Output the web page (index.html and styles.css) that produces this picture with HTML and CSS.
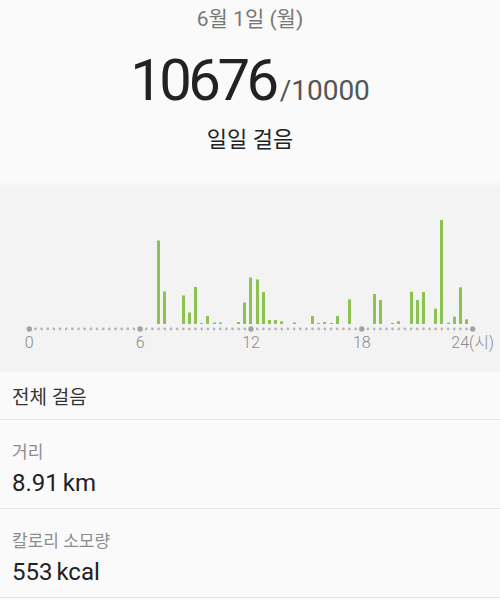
FILE: index.html
```html
<!DOCTYPE html>
<html lang="ko">
<head>
<meta charset="utf-8">
<link rel="stylesheet" href="styles.css">
</head>
<body>
<header class="summary">
  <div class="date">6월 1일 (월)</div>
  <div class="total"><span class="steps">10676</span><span class="goal">/10000</span></div>
  <div class="caption">일일 걸음</div>
</header>
<section class="chart">
  <svg class="chart-svg" width="500" height="189" viewBox="0 0 500 189">
    <g class="bars">
      <rect x="157" y="57.5" width="3" height="83.5"/>
      <rect x="163" y="108.5" width="3" height="32.5"/>
      <rect x="182" y="112.5" width="3" height="28.5"/>
      <rect x="188" y="129.5" width="3" height="11.5"/>
      <rect x="194" y="104" width="3" height="37"/>
      <rect x="200" y="140" width="3" height="1"/>
      <rect x="206" y="133" width="3" height="8"/>
      <rect x="213" y="139.5" width="3" height="1.5"/>
      <rect x="219" y="139.5" width="3" height="1.5"/>
      <rect x="237" y="139" width="3" height="2"/>
      <rect x="243" y="119.5" width="3" height="21.5"/>
      <rect x="249" y="94.5" width="3" height="46.5"/>
      <rect x="256" y="96.5" width="3" height="44.5"/>
      <rect x="262" y="109" width="3" height="32"/>
      <rect x="268" y="137" width="3" height="4"/>
      <rect x="274" y="137" width="3" height="4"/>
      <rect x="280" y="138.3" width="3" height="2.7"/>
      <rect x="293" y="139.5" width="3" height="1.5"/>
      <rect x="311" y="133" width="3" height="8"/>
      <rect x="317" y="140" width="3" height="1"/>
      <rect x="323" y="139" width="3" height="2"/>
      <rect x="330" y="140" width="3" height="1"/>
      <rect x="336" y="133" width="3" height="8"/>
      <rect x="348" y="116.3" width="3" height="24.7"/>
      <rect x="373" y="111" width="3" height="30"/>
      <rect x="379" y="117" width="3" height="24"/>
      <rect x="391" y="140" width="3" height="1"/>
      <rect x="397" y="138.3" width="3" height="2.7"/>
      <rect x="410" y="108.7" width="3" height="32.3"/>
      <rect x="416" y="117" width="3" height="24"/>
      <rect x="422" y="109" width="3" height="32"/>
      <rect x="434" y="125.7" width="3" height="15.3"/>
      <rect x="440" y="37" width="3" height="104"/>
      <rect x="447" y="139.7" width="3" height="1.3"/>
      <rect x="453" y="133.7" width="3" height="7.3"/>
      <rect x="459" y="104.3" width="3" height="36.7"/>
      <rect x="465" y="136.3" width="3" height="4.7"/>
    </g>
    <line class="axis-dots" x1="29.3" y1="146" x2="472.7" y2="146"/>
    <g class="axis-major">
      <circle cx="29.3" cy="146" r="2.7"/>
      <circle cx="140.1" cy="146" r="2.7"/>
      <circle cx="251" cy="146" r="2.7"/>
      <circle cx="361.8" cy="146" r="2.7"/>
      <circle cx="472.7" cy="146" r="2.7"/>
    </g>
    <g class="axis-labels">
      <text x="29.3" y="165">0</text>
      <text x="140.1" y="165">6</text>
      <text x="251" y="165">12</text>
      <text x="361.8" y="165">18</text>
      <text x="472.7" y="165">24(시)</text>
    </g>
  </svg>
</section>
<section class="stats">
  <div class="row row-title">전체 걸음</div>
  <div class="row row-stat">
    <div class="stat-label">거리</div>
    <div class="stat-value">8.91 km</div>
  </div>
  <div class="row row-stat">
    <div class="stat-label">칼로리 소모량</div>
    <div class="stat-value">553 kcal</div>
  </div>
</section>
</body>
</html>
```
FILE: styles.css
```css
html, body {
  margin: 0;
  padding: 0;
}
body {
  width: 500px;
  height: 600px;
  overflow: hidden;
  background: #fafafa;
  font-family: Roboto, "Noto Sans CJK KR", sans-serif;
  color: #222;
}
.summary {
  display: flex;
  flex-direction: column;
  align-items: center;
  height: 183px;
  box-sizing: border-box;
  padding-top: 4px;
}
.date {
  font-size: 21px;
  line-height: 30px;
  color: #777;
}
.total {
  margin-top: 16px;
  line-height: 60px;
  display: flex;
  align-items: baseline;
}
.steps {
  font-size: 58px;
  letter-spacing: -3.5px;
  color: #222;
  margin-right: 4px;
}
.goal {
  font-size: 28px;
  color: #555;
}
.caption {
  margin-top: 4px;
  font-size: 22px;
  line-height: 30px;
  color: #222;
}
.chart {
  height: 189px;
  background: linear-gradient(#f6f6f6, #f3f3f3 6px);
}
.chart-svg {
  display: block;
}
.bars rect {
  fill: #8cc350;
}
.axis-dots {
  stroke: #b8b8b8;
  stroke-width: 2.8;
  stroke-linecap: round;
  stroke-dasharray: 0 6.158;
}
.axis-major circle {
  fill: #a3a3a3;
}
.axis-labels text {
  font-family: Roboto, "Noto Sans CJK KR", sans-serif;
  font-size: 16px;
  font-weight: 300;
  fill: #8a8a8a;
  text-anchor: middle;
}
.stats {
  display: flex;
  flex-direction: column;
}
.row {
  padding: 0 12px;
  border-bottom: 1px solid #e5e5e5;
  box-sizing: border-box;
}
.row-title {
  height: 48px;
  display: flex;
  align-items: center;
  font-size: 19px;
  color: #333;
}
.row-stat {
  height: 89px;
  padding-top: 20px;
}
.stat-label {
  font-size: 17px;
  line-height: 24px;
  color: #8c8c8c;
}
.stat-value {
  margin-top: 4px;
  font-size: 24px;
  line-height: 30px;
  color: #222;
  word-spacing: -2px;
}
```
